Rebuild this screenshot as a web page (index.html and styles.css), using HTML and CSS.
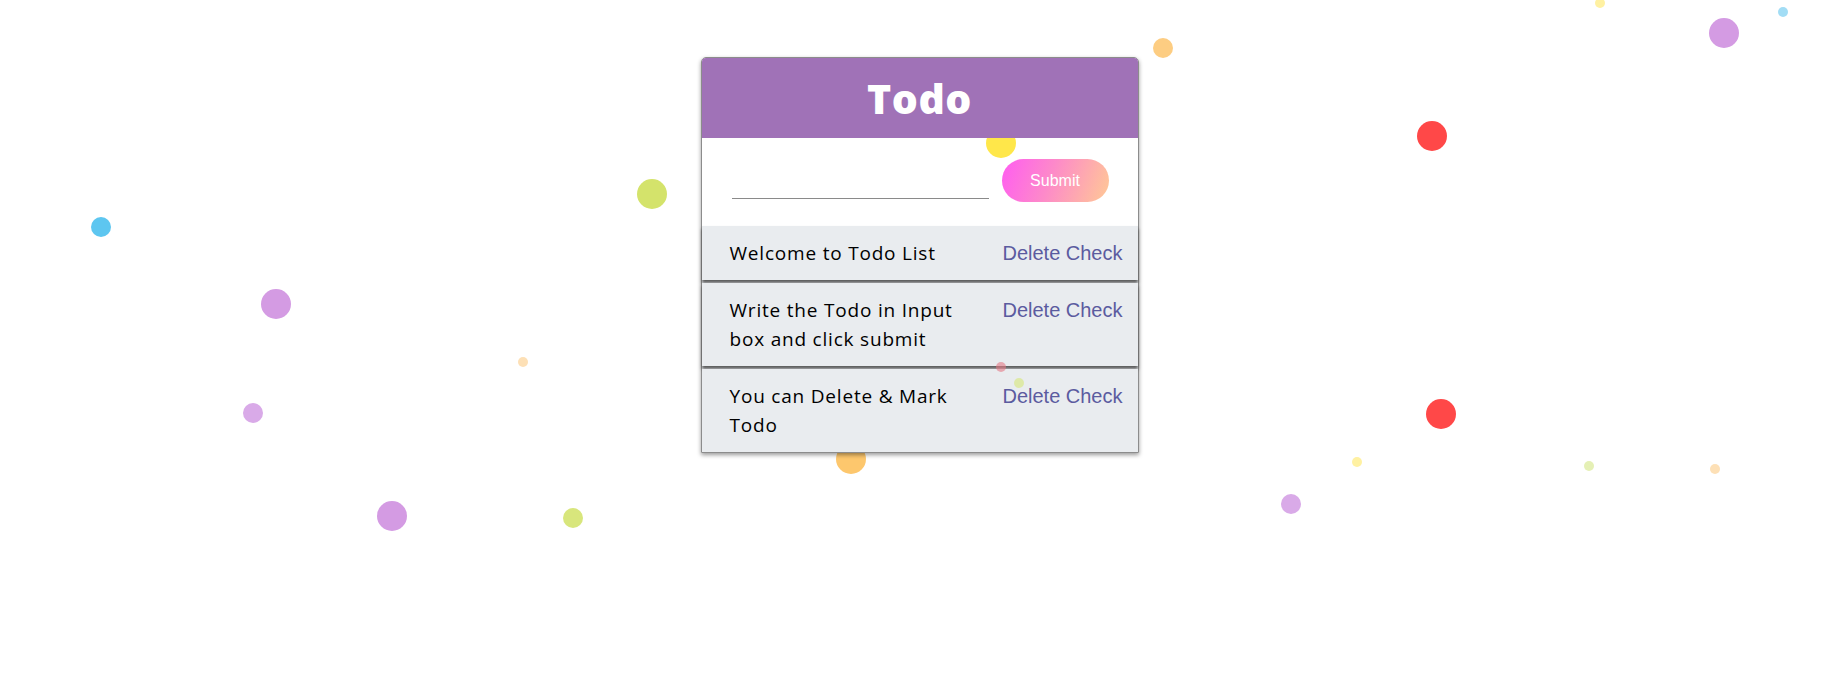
FILE: index.html
```html
<!DOCTYPE html>
<html lang="en">
<head>
<meta charset="utf-8">
<title>Todo</title>
<link rel="stylesheet" href="styles.css">
</head>
<body>
<div class="scene">
  <div class="confetti back">
    <span class="dot s10 pale-yellow" style="left:1595px;top:-2px"></span>
    <span class="dot s30 purple" style="left:1709px;top:18px"></span>
    <span class="dot s10 light-blue" style="left:1778px;top:7px"></span>
    <span class="dot s20 orange" style="left:1153px;top:38px"></span>
    <span class="dot s30 red" style="left:1417px;top:121px"></span>
    <span class="dot s30 yellow" style="left:986px;top:128px"></span>
    <span class="dot s30 green" style="left:637px;top:179px"></span>
    <span class="dot s20 blue" style="left:91px;top:217px"></span>
    <span class="dot s30 purple" style="left:261px;top:289px"></span>
    <span class="dot s10 peach" style="left:518px;top:357px"></span>
    <span class="dot s20 lilac" style="left:243px;top:403px"></span>
    <span class="dot s30 purple" style="left:377px;top:501px"></span>
    <span class="dot s20 lime" style="left:563px;top:508px"></span>
    <span class="dot s30 amber" style="left:836px;top:444px"></span>
    <span class="dot s30 red" style="left:1426px;top:399px"></span>
    <span class="dot s10 pale-yellow" style="left:1352px;top:457px"></span>
    <span class="dot s20 lilac" style="left:1281px;top:494px"></span>
    <span class="dot s10 pale-green" style="left:1584px;top:461px"></span>
    <span class="dot s10 peach" style="left:1710px;top:464px"></span>
  </div>

  <main class="card">
    <header class="card-header">
      <h1 class="title">Todo</h1>
    </header>
    <form class="todo-form">
      <input class="todo-input" type="text" aria-label="New todo">
      <button class="submit-btn" type="button">Submit</button>
    </form>
    <ul class="todo-list">
      <li class="todo-item">
        <span class="todo-text">Welcome to Todo List</span>
        <span class="actions"><button class="action" type="button">Delete</button><button class="action" type="button">Check</button></span>
      </li>
      <li class="todo-item">
        <span class="todo-text">Write the Todo in Input box and click submit</span>
        <span class="actions"><button class="action" type="button">Delete</button><button class="action" type="button">Check</button></span>
      </li>
      <li class="todo-item">
        <span class="todo-text">You can Delete &amp; Mark Todo</span>
        <span class="actions"><button class="action" type="button">Delete</button><button class="action" type="button">Check</button></span>
      </li>
    </ul>
  </main>

  <div class="confetti front">
    <span class="dot s10 faded-red" style="left:996px;top:362px"></span>
    <span class="dot s10 faded-green" style="left:1014px;top:378px"></span>
  </div>
</div>
</body>
</html>
```

FILE: styles.css
```css
* { box-sizing: border-box; }

html, body {
  margin: 0;
  padding: 0;
  background: #ffffff;
}

.scene {
  position: relative;
  min-height: 100vh;
  overflow: hidden;
  padding-top: 57px;
  padding-left: 3px;
}

.confetti {
  position: absolute;
  inset: 0;
  pointer-events: none;
}
.confetti.back { z-index: 0; }
.confetti.front { z-index: 2; }

.dot {
  position: absolute;
  border-radius: 50%;
  display: block;
}
.s10 { width: 10px; height: 10px; }
.s20 { width: 20px; height: 20px; }
.s30 { width: 30px; height: 30px; }

.pale-yellow { background: #fff1a2; }
.purple { background: #d49be3; }
.light-blue { background: #a2ddf5; }
.orange { background: #fdcd82; }
.red { background: #ff4848; }
.yellow { background: #ffe74a; }
.green { background: #d4e36b; }
.blue { background: #5dc6f0; }
.peach { background: #fde0b6; }
.lilac { background: #d9aae8; }
.lime { background: #d8e67c; }
.amber { background: #fdc76d; }
.pale-green { background: #e5f0b5; }
.faded-red { background: #e47a86; opacity: 0.6; }
.faded-green { background: #d9e88a; opacity: 0.7; }

.card {
  position: relative;
  z-index: 1;
  width: 438px;
  margin: 0 auto;
  border: 1px solid #8c8c8c;
  border-radius: 5px 5px 0 0;
  box-shadow: 0 2px 4px rgba(0, 0, 0, 0.4);
  font-family: "Open Sans", "DejaVu Sans", sans-serif;
}

.card-header {
  height: 80px;
  background: #a072b7;
  border-radius: 4px 4px 0 0;
  display: flex;
  align-items: center;
  justify-content: center;
}

.title {
  margin: 0;
  color: #ffffff;
  font-family: "Open Sans", sans-serif;
  font-weight: 800;
  font-size: 41px;
  line-height: 1;
  letter-spacing: 0.5px;
}

.todo-form {
  height: 85px;
  margin: 0;
  padding: 0 29px 0 30px;
  display: flex;
  align-items: center;
  gap: 13px;
  background: transparent;
}

.todo-input {
  flex: 1;
  min-width: 0;
  height: 36px;
  border: none;
  border-bottom: 1px solid #8a8a8a;
  background: transparent;
  outline: none;
  font-family: inherit;
  font-size: 16px;
}

.submit-btn {
  width: 107px;
  height: 43px;
  border: none;
  border-radius: 22px;
  background: linear-gradient(110deg, #ff5cf1 0%, #fd8ac9 45%, #ffc995 100%);
  color: #ffffff;
  font-family: "Liberation Sans", Arial, sans-serif;
  font-size: 16px;
  padding: 0;
}

.todo-list {
  list-style: none;
  margin: 0;
  padding: 0;
  background: #e9ecef;
}

.todo-item {
  display: flex;
  align-items: flex-start;
  justify-content: space-between;
  margin-top: 3px;
  padding: 13px 15px 12px 28px;
  background: #e9ecef;
  box-shadow: 0 3px 3px rgba(55, 55, 55, 0.8);
  position: relative;
}
.todo-item:last-child { box-shadow: none; }

.todo-text {
  width: 240px;
  color: #000000;
  font-size: 19px;
  line-height: 29px;
  letter-spacing: 0.8px;
}

.actions {
  display: flex;
  gap: 5.5px;
}

.action {
  border: none;
  background: transparent;
  padding: 0;
  color: #5b5b9f;
  font-family: "Liberation Sans", Arial, sans-serif;
  font-size: 20px;
  line-height: 29px;
}
```
